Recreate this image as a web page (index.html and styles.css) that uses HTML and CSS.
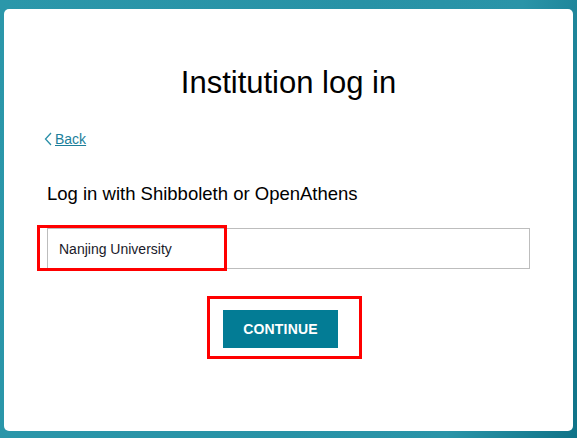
FILE: index.html
```html
<!DOCTYPE html>
<html>
<head>
<meta charset="utf-8">
<link rel="stylesheet" href="styles.css">
</head>
<body>
<div class="card">
  <h1 class="title">Institution log in</h1>
  <a class="back" href="#"><svg class="chev" width="8" height="14" viewBox="0 0 8 14"><path d="M7 1 L1.5 7 L7 13" fill="none" stroke="#2a8fa8" stroke-width="1.3"/></svg><span class="back-text">Back</span></a>
  <p class="label">Log in with Shibboleth or OpenAthens</p>
  <div class="field">
    <div class="input">Nanjing University</div>
    <div class="mark mark-input"></div>
  </div>
  <div class="actions">
    <div class="btn-wrap">
      <button class="btn">CONTINUE</button>
    </div>
  </div>
</div>
</body>
</html>
```
FILE: styles.css
```css
html, body {
  margin: 0;
  padding: 0;
}
body {
  width: 577px;
  height: 438px;
  background: linear-gradient(100deg, #2b97aa 0%, #2892a6 55%, #2a94a8 80%, #0f7388 100%);
  font-family: "Liberation Sans", Arial, sans-serif;
  padding: 9px 4px 0 4px;
  box-sizing: border-box;
  overflow: hidden;
}
.card {
  background: #fff;
  border-radius: 5px;
  height: 422px;
  box-sizing: border-box;
  padding: 0 43px 0 43px;
}
.title {
  margin: 0;
  padding-top: 57px;
  font-weight: normal;
  font-size: 31px;
  line-height: 34px;
  text-align: center;
  color: #000;
}
.back {
  display: inline-flex;
  align-items: center;
  gap: 3px;
  margin-top: 31px;
  color: #1c7f9b;
  font-size: 14px;
  line-height: 16px;
  text-decoration: none;
  margin-left: -3px;
}
.back-text {
  text-decoration: underline;
}
.label {
  margin: 0;
  margin-top: 33px;
  font-size: 18.5px;
  line-height: 22px;
  color: #000;
}
.field {
  position: relative;
  margin-top: 23px;
}
.input {
  height: 41px;
  border: 1px solid #bdbdbd;
  box-sizing: border-box;
  padding: 0 11px;
  display: flex;
  align-items: center;
  font-size: 14px;
  color: #1a1a2a;
}
.mark {
  position: absolute;
  border: 3px solid #f00;
  box-sizing: border-box;
}
.mark-input {
  left: -10px;
  top: -3px;
  width: 190px;
  height: 46px;
}
.actions {
  display: flex;
  justify-content: center;
  margin-top: 27px;
}
.btn-wrap {
  border: 3px solid #f00;
  padding: 11px 21px 8px 13px;
  margin-right: 8px;
}
.btn {
  width: 115px;
  height: 38px;
  border: none;
  background: #037c95;
  color: #fff;
  font-family: "Liberation Sans", Arial, sans-serif;
  font-weight: bold;
  font-size: 14px;
  letter-spacing: 0.2px;
  padding: 0;
}
```
